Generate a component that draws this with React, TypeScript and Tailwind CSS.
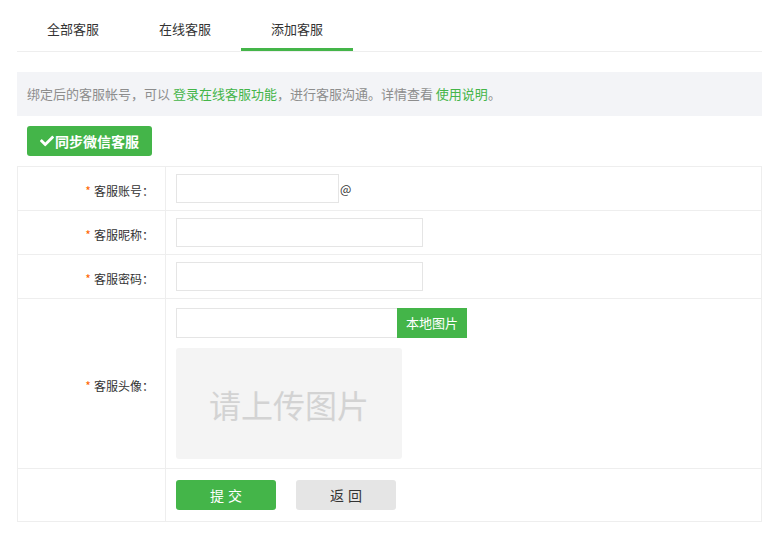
import React from "react";

const font = { fontFamily: '"Noto Sans CJK SC", "Noto Sans", sans-serif' };

function Label({ text }: { text: string }) {
  return (
    <span className="text-[12px] text-[#333]">
      <span className="text-[#ff6600] mr-[3px]">*</span>
      {text}：
    </span>
  );
}

export default function App() {
  return (
    <div className="w-[770px] h-[537px] bg-white pl-[17px]" style={font}>
      <div className="w-[745px]">
        <div className="flex h-[52px] border-b border-[#eeeeee]">
          <div className="w-[112px] h-[51px] pt-[19px] text-center text-[13px] leading-[20px] text-[#333]">全部客服</div>
          <div className="w-[112px] h-[51px] pt-[19px] text-center text-[13px] leading-[20px] text-[#333]">在线客服</div>
          <div className="w-[112px] h-[51px] pt-[19px] text-center text-[13px] leading-[20px] text-[#333] border-b-[3px] border-[#44b549]">添加客服</div>
        </div>
        <div className="mt-[20px] h-[44px] bg-[#f3f4f7] flex items-center pl-[10px] text-[13px] text-[#8d8d8d]">
          绑定后的客服帐号，可以&nbsp;<span className="text-[#44b549]">登录在线客服功能</span>，进行客服沟通。详情查看&nbsp;<span className="text-[#44b549]">使用说明</span>。
        </div>
        <div className="mt-[10px] ml-[10px]">
          <button className="h-[30px] w-[125px] rounded-[3px] bg-[#44b549] text-white text-[14px] font-bold flex items-center justify-center">
            <svg width="14" height="14" viewBox="0 0 512 512" className="mr-[1px]">
              <path fill="white" d="M173.9 439.4l-166.4-166.4c-10-10-10-26.2 0-36.2l36.2-36.2c10-10 26.2-10 36.2 0L192 312.7 432.1 72.6c10-10 26.2-10 36.2 0l36.2 36.2c10 10 10 26.2 0 36.2l-294.4 294.4c-10 10-26.2 10-36.2 0z" />
            </svg>
            同步微信客服
          </button>
        </div>
        <table className="mt-[10px] w-[745px] border-collapse">
          <tbody>
            <tr className="h-[44px]">
              <td className="w-[148px] border border-[#eeeeee] text-right pr-[11px]"><Label text="客服账号" /></td>
              <td className="border border-[#eeeeee] pl-[10px]">
                <div className="flex items-center">
                  <div className="w-[163px] h-[29px] border border-[#e5e5e5]" />
                  <span className="text-[12px] text-[#333] ml-[1px]">@</span>
                </div>
              </td>
            </tr>
            <tr className="h-[44px]">
              <td className="border border-[#eeeeee] text-right pr-[11px]"><Label text="客服昵称" /></td>
              <td className="border border-[#eeeeee] pl-[10px]">
                <div className="w-[247px] h-[29px] border border-[#e5e5e5]" />
              </td>
            </tr>
            <tr className="h-[44px]">
              <td className="border border-[#eeeeee] text-right pr-[11px]"><Label text="客服密码" /></td>
              <td className="border border-[#eeeeee] pl-[10px]">
                <div className="w-[247px] h-[29px] border border-[#e5e5e5]" />
              </td>
            </tr>
            <tr className="h-[170px]">
              <td className="border border-[#eeeeee] text-right pr-[11px]"><Label text="客服头像" /></td>
              <td className="border border-[#eeeeee] pl-[10px]">
                <div className="flex">
                  <div className="w-[221px] h-[30px] border border-[#e5e5e5] border-r-0" />
                  <div className="w-[70px] h-[30px] bg-[#44b549] text-white text-[13px] flex items-center justify-center">本地图片</div>
                </div>
                <div className="mt-[10px] w-[226px] h-[111px] rounded-[3px] bg-[#f4f4f4] flex items-center justify-center text-[32px] text-[#d3d3d3]">
                  请上传图片
                </div>
              </td>
            </tr>
            <tr className="h-[53px]">
              <td className="border border-[#eeeeee]"></td>
              <td className="border border-[#eeeeee] pl-[10px]">
                <div className="flex gap-[20px]">
                  <button className="w-[100px] h-[30px] rounded-[3px] bg-[#44b549] text-white text-[14px] tracking-[4px] pl-[4px]">提交</button>
                  <button className="w-[100px] h-[30px] rounded-[3px] bg-[#e5e5e5] text-[#333] text-[14px] tracking-[4px] pl-[4px]">返回</button>
                </div>
              </td>
            </tr>
          </tbody>
        </table>
      </div>
    </div>
  );
}
